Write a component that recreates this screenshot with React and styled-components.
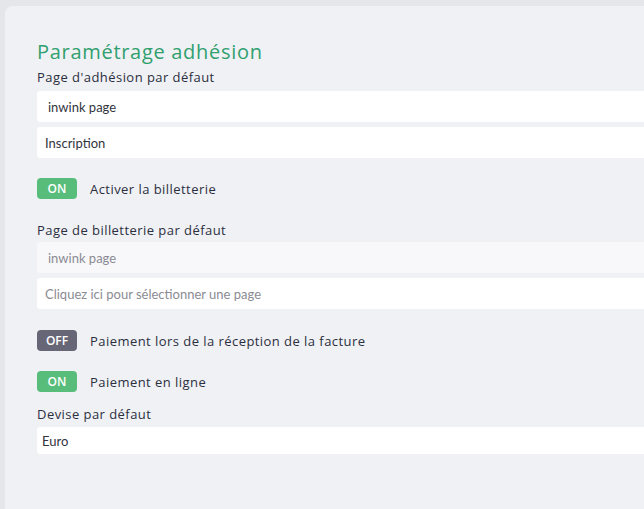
import React from 'react'
import styled, { createGlobalStyle } from 'styled-components'

const Global = createGlobalStyle`
  html, body {
    margin: 0;
    padding: 0;
    background: #e5e6ea;
    overflow: hidden;
  }
`

const Card = styled.div`
  margin: 6px 0 0 5px;
  width: 639px;
  min-height: 520px;
  box-sizing: border-box;
  background: #f0f1f5;
  border-top-left-radius: 8px;
  padding: 34px 0 0 32px;
  font-family: "Open Sans", sans-serif;
  color: #2b2f3e;
`
const Title = styled.h2`
  margin: 0 0 4px;
  font-size: 20px;
  line-height: 24px;
  font-weight: 500;
  color: #31a06f;
  letter-spacing: 0.7px;
`
const Label = styled.div`
  font-size: 13px;
  line-height: 18px;
  letter-spacing: 0.45px;
  margin-top: ${p => p.$top || 0}px;
  margin-bottom: ${p => p.$bottom || 5}px;
`
const Fields = styled.div`
  display: flex;
  flex-direction: column;
  gap: 5px;
`
const Field = styled.div`
  height: ${p => p.$h || 31}px;
  display: flex;
  align-items: center;
  padding-left: ${p => p.$pad || 8}px;
  background: ${p => (p.$disabled ? '#f8f8fa' : '#fff')};
  border-radius: 3px 0 0 3px;
  font-family: Lato, sans-serif;
  font-size: 13px;
  color: ${p => (p.$muted ? '#8b8b93' : '#33353d')};
`
const ToggleRow = styled.div`
  display: flex;
  align-items: center;
  gap: 13px;
  margin-top: ${p => p.$top || 0}px;
  font-size: 13px;
  letter-spacing: 0.45px;
`
const Toggle = styled.span`
  width: 40px;
  height: 21px;
  border-radius: 4px;
  background: ${p => (p.$on ? '#58bd7b' : '#676676')};
  color: #fff;
  font-size: 12px;
  font-weight: 600;
  letter-spacing: 0;
  display: flex;
  align-items: center;
  justify-content: center;
`

export default function App () {
  return (
    <>
      <Global />
      <Card>
        <Title>Paramétrage adhésion</Title>
        <Label>Page d'adhésion par défaut</Label>
        <Fields>
          <Field $pad={11}>inwink page</Field>
          <Field>Inscription</Field>
        </Fields>
        <ToggleRow $top={20}>
          <Toggle $on>ON</Toggle>
          Activer la billetterie
        </ToggleRow>
        <Label $top={22} $bottom={3}>Page de billetterie par défaut</Label>
        <Fields>
          <Field $pad={11} $disabled $muted>inwink page</Field>
          <Field $muted>Cliquez ici pour sélectionner une page</Field>
        </Fields>
        <ToggleRow $top={21}>
          <Toggle>OFF</Toggle>
          Paiement lors de la réception de la facture
        </ToggleRow>
        <ToggleRow $top={20}>
          <Toggle $on>ON</Toggle>
          Paiement en ligne
        </ToggleRow>
        <Label $top={13} $bottom={4}>Devise par défaut</Label>
        <Field $h={27} $pad={5}>Euro</Field>
      </Card>
    </>
  )
}
